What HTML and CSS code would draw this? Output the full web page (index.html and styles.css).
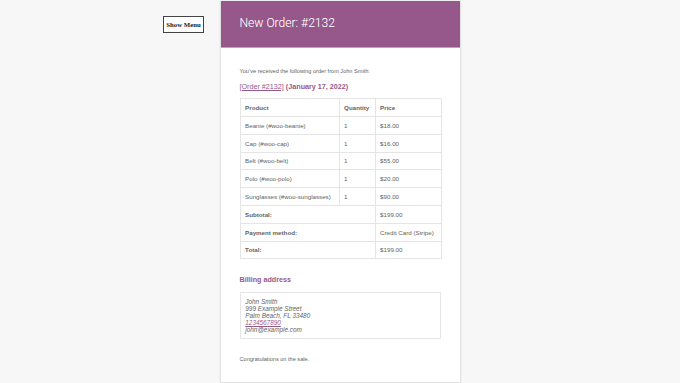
FILE: index.html
```html
<!DOCTYPE html>
<html lang="en">
<head>
<meta charset="utf-8">
<title>New Order: #2132</title>
<link rel="stylesheet" href="styles.css">
</head>
<body>
<button class="menu-btn" type="button">Show Menu</button>
<div class="wrapper">
  <div class="email">
    <div class="email-header">
      <h1 class="email-title">New Order: #2132</h1>
    </div>
    <div class="email-body">
      <p class="para">You’ve received the following order from John Smith:</p>
      <h2 class="section-title"><a class="order-link" href="#">[Order #2132]</a> (January 17, 2022)</h2>
      <table class="order-table">
        <colgroup>
          <col class="col-product">
          <col class="col-qty">
          <col class="col-price">
        </colgroup>
        <thead>
          <tr>
            <th>Product</th>
            <th>Quantity</th>
            <th>Price</th>
          </tr>
        </thead>
        <tbody>
          <tr><td>Beanie (#woo-beanie)</td><td>1</td><td>$18.00</td></tr>
          <tr><td>Cap (#woo-cap)</td><td>1</td><td>$16.00</td></tr>
          <tr><td>Belt (#woo-belt)</td><td>1</td><td>$55.00</td></tr>
          <tr><td>Polo (#woo-polo)</td><td>1</td><td>$20.00</td></tr>
          <tr><td>Sunglasses (#woo-sunglasses)</td><td>1</td><td>$90.00</td></tr>
        </tbody>
        <tfoot>
          <tr class="first-foot"><th colspan="2">Subtotal:</th><td>$199.00</td></tr>
          <tr><th colspan="2">Payment method:</th><td>Credit Card (Stripe)</td></tr>
          <tr><th colspan="2">Total:</th><td>$199.00</td></tr>
        </tfoot>
      </table>
      <h2 class="section-title billing-title">Billing address</h2>
      <address class="address">
        John Smith<br>
        999 Example Street<br>
        Palm Beach, FL 33480<br>
        <a class="phone-link" href="#">1234567890</a><br>
        john@example.com
      </address>
      <p class="para">Congratulations on the sale.</p>
    </div>
  </div>
</div>
</body>
</html>
```

FILE: styles.css
```css
html, body {
  margin: 0;
  padding: 0;
  background: #f7f7f7;
}

body {
  font-family: "Liberation Sans", Arial, sans-serif;
}

.menu-btn {
  position: absolute;
  left: 163px;
  top: 16px;
  width: 41px;
  height: 17px;
  padding: 0;
  background: #fff;
  border: 1px solid #444;
  border-radius: 0;
  font-family: "Liberation Serif", "Times New Roman", serif;
  font-size: 6.8px;
  font-weight: bold;
  color: #222;
}

.wrapper {
  display: flex;
  justify-content: center;
}

.email {
  width: 241px;
  box-sizing: border-box;
  background: #fff;
  border: 1px solid #e2e2e2;
  border-top-color: #f0f0f0;
  border-radius: 2px;
  box-shadow: 0 0.5px 2px rgba(0, 0, 0, 0.08);
}

.email-header {
  background: #96588a;
  padding: 14.4px 19px;
  border-bottom: 1px solid #c69bbd;
  height: 17px;
}

.email-title {
  margin: 0;
  font-family: Roboto, "Liberation Sans", sans-serif;
  font-weight: 300;
  font-size: 12.1px;
  line-height: 17px;
  color: #fff;
  text-shadow: 0 0.4px 0 #ab79a1;
}

.email-body {
  padding: 19px 19px 12px 19px;
  color: #636363;
  font-size: 5.6px;
  line-height: 8.4px;
}

.para {
  margin: 0 0 6.4px;
}

.section-title {
  margin: 0 0 7.2px;
  color: #96588a;
  font-size: 7.2px;
  line-height: 9.4px;
  font-weight: bold;
}

.order-link {
  color: #96588a;
  font-weight: normal;
  text-decoration: underline;
}

.order-table {
  width: 201px;
  table-layout: fixed;
  border-collapse: collapse;
  border: 1px solid #e5e5e5;
  margin-bottom: 16px;
  color: #636363;
}

.col-product { width: 99px; }
.col-qty { width: 36px; }
.col-price { width: 66px; }

.order-table th,
.order-table td {
  border: 1px solid #e5e5e5;
  padding: 4.8px 4.6px;
  line-height: 7.2px;
  text-align: left;
  vertical-align: middle;
  font-size: 6.2px;
  white-space: nowrap;
  overflow: hidden;
}

.order-table th {
  font-weight: bold;
}

.order-table .first-foot th,
.order-table .first-foot td {
  border-top: 1.6px solid #e5e5e5;
}

.billing-title {
  margin-bottom: 7.4px;
}

.address {
  border: 1px solid #e5e5e5;
  padding: 4.8px;
  font-style: italic;
  font-size: 6.4px;
  line-height: 7px;
  margin-bottom: 16px;
}

.phone-link {
  color: #96588a;
  text-decoration: underline;
}
```
